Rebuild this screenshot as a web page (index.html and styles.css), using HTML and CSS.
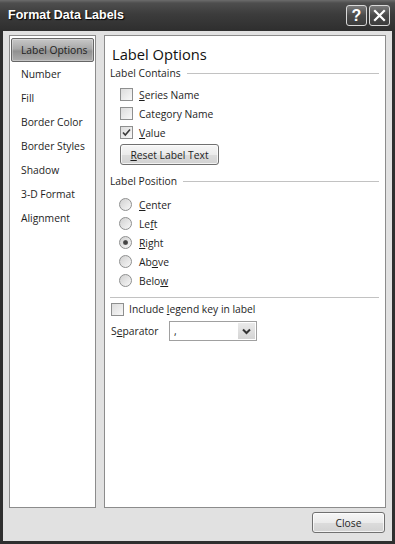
FILE: index.html
```html
<!DOCTYPE html>
<html>
<head>
<meta charset="utf-8">
<link rel="stylesheet" href="styles.css">
</head>
<body>
<div class="window">
  <div class="titlebar">
    <span class="title">Format Data Labels</span>
    <div class="tbtns">
      <span class="tbtn">?</span>
      <span class="tbtn"><svg width="13" height="13" viewBox="0 0 13 13"><path d="M2 2 L11 11 M11 2 L2 11" stroke="#fff" stroke-width="2.2" stroke-linecap="square"/></svg></span>
    </div>
  </div>
  <div class="client">
    <div class="panes">
      <ul class="nav">
        <li class="sel">Label Options</li>
        <li>Number</li>
        <li>Fill</li>
        <li>Border Color</li>
        <li>Border Styles</li>
        <li>Shadow</li>
        <li>3-D Format</li>
        <li>Alignment</li>
      </ul>
      <div class="content">
        <div class="heading">Label Options</div>
        <div class="section">Label Contains</div>
        <div class="checks">
          <div class="row"><span class="cb"></span><span><u>S</u>eries Name</span></div>
          <div class="row"><span class="cb"></span><span>Cate<u>g</u>ory Name</span></div>
          <div class="row"><span class="cb"><svg width="11" height="11" viewBox="0 0 11 11"><path d="M2 5.5 L4.3 8 L9 2.5" fill="none" stroke="#3a3a3a" stroke-width="1.6"/></svg></span><span><u>V</u>alue</span></div>
          <button class="btn reset"><u>R</u>eset Label Text</button>
        </div>
        <div class="section pos">Label Position</div>
        <div class="radios">
          <div class="row"><span class="rb"></span><span><u>C</u>enter</span></div>
          <div class="row"><span class="rb"></span><span>Le<u>f</u>t</span></div>
          <div class="row"><span class="rb on"></span><span><u>R</u>ight</span></div>
          <div class="row"><span class="rb"></span><span>Ab<u>o</u>ve</span></div>
          <div class="row"><span class="rb"></span><span>Belo<u>w</u></span></div>
        </div>
        <div class="rule"></div>
        <div class="row include"><span class="cb"></span><span>Include <u>l</u>egend key in label</span></div>
        <div class="seprow">
          <span class="seplabel">S<u>e</u>parator</span>
          <div class="select"><span class="val">,</span><span class="arrow"><svg width="9" height="7" viewBox="0 0 9 7"><path d="M1 1.5 L4.5 5 L8 1.5" fill="none" stroke="#333" stroke-width="2"/></svg></span></div>
        </div>
      </div>
    </div>
    <div class="footer"><button class="btn close">Close</button></div>
  </div>
</div>
</body>
</html>
```
FILE: styles.css
```css
* { box-sizing: border-box; }
html, body { margin: 0; padding: 0; }
body {
  background: #2b2b2b;
  font-family: "Open Sans", "Noto Sans", sans-serif;
  font-size: 10.3px;
  color: #1e1e1e;
}
.window {
  width: 395px;
  height: 544px;
  display: flex;
  flex-direction: column;
  background: #2f2f2f;
}
.titlebar {
  height: 31px;
  flex: none;
  display: flex;
  align-items: flex-start;
  padding: 0 5px 0 8px;
  background: linear-gradient(#6c6c6c 0, #4e4e4e 3px, #3c3c3c 14px, #2e2e2e 31px);
}
.title {
  flex: 1;
  margin-top: 8px;
  font: bold 12.5px "Liberation Sans", Arial, sans-serif;
  color: #fff;
  text-shadow: 1px 1px 1px #000;
}
.tbtns { display: flex; gap: 2px; margin-top: 5px; }
.tbtn {
  width: 21px;
  height: 21px;
  border: 1px solid #d8d8d8;
  border-radius: 3px;
  background: linear-gradient(#7a7a7a, #4a4a4a 50%, #3c3c3c);
  display: flex;
  align-items: center;
  justify-content: center;
  color: #fff;
  font: bold 16px "Liberation Sans", Arial, sans-serif;
}
.client {
  flex: 1;
  margin: 0 3px 3px;
  background: #e1e1e1;
  padding: 4px 6px 0 6px;
  display: flex;
  flex-direction: column;
}
.panes { height: 473px; display: flex; gap: 8px; flex: none; }
.nav {
  width: 87px;
  margin: 0;
  padding: 2px 1px;
  list-style: none;
  border: 1px solid #8c8c8c;
  background: #fff;
}
.nav li {
  height: 24px;
  line-height: 24px;
  padding-left: 10px;
  white-space: nowrap;
}
.nav li.sel {
  border: 1px solid #666;
  border-radius: 2px;
  line-height: 22px;
  padding-left: 9px;
  background: linear-gradient(#c8c8c8, #a8a8a8 45%, #909090 55%, #acacac);
  box-shadow: inset 0 0 0 1px rgba(255,255,255,0.3);
}
.content {
  flex: 1;
  border: 1px solid #8c8c8c;
  background: #fff;
  padding: 7px 6px 0 5px;
}
.heading {
  font-size: 14.7px;
  line-height: 22px;
  margin-left: 2px;
  color: #111;
}
.section {
  display: flex;
  align-items: center;
  height: 16px;
  white-space: nowrap;
}
.section::after {
  content: "";
  flex: 1;
  height: 1px;
  background: #c2c2c2;
  margin-left: 6px;
}
.section.pos { margin-top: 8px; }
.checks { margin-top: 4px; padding-left: 10px; }
.row {
  height: 19px;
  display: flex;
  align-items: center;
  gap: 6px;
  white-space: nowrap;
}
.cb {
  width: 13px;
  height: 13px;
  flex: none;
  border: 1px solid #8e8f8f;
  background: linear-gradient(135deg, #dcdcdc, #f8f8f8);
  display: flex;
  align-items: center;
  justify-content: center;
}
.btn {
  font-family: inherit;
  font-size: 10.3px;
  color: #1e1e1e;
  border: 1px solid #707070;
  border-radius: 3px;
  background: linear-gradient(#f6f6f6, #ebebeb 50%, #dcdcdc 51%, #d2d2d2);
  box-shadow: inset 0 0 0 1px rgba(255,255,255,0.7);
  padding: 0;
  height: 21px;
}
.reset { width: 99px; margin-top: 2px; }
.radios { margin-top: 6px; padding-left: 9px; }
.radios .row { gap: 7px; }
.rb {
  width: 13px;
  height: 13px;
  flex: none;
  border: 1px solid #8e8f8f;
  border-radius: 50%;
  background: linear-gradient(135deg, #d0d0d0, #f8f8f8);
  display: flex;
  align-items: center;
  justify-content: center;
}
.rb.on::after {
  content: "";
  width: 5px;
  height: 5px;
  border-radius: 50%;
  background: radial-gradient(#444 40%, #888);
}
.rule {
  margin-top: 7px;
  height: 1px;
  background: #c2c2c2;
}
.include {
  margin-top: 2px;
  height: 18px;
  padding-left: 1px;
  gap: 5px;
}
.seprow {
  margin-top: 3px;
  height: 20px;
  display: flex;
  align-items: center;
  padding-left: 1px;
}
.seplabel { width: 58px; flex: none; }
.select {
  width: 88px;
  height: 20px;
  border: 1px solid #a0a0a0;
  background: #fff;
  display: flex;
  align-items: center;
  padding: 1px;
}
.val { flex: 1; padding-left: 3px; }
.arrow {
  width: 17px;
  height: 16px;
  background: linear-gradient(#eaeaea, #d4d4d4);
  display: flex;
  align-items: center;
  justify-content: center;
}
.footer {
  display: flex;
  justify-content: flex-end;
  padding-top: 4px;
  padding-right: 1px;
}
.close { width: 73px; }
```
